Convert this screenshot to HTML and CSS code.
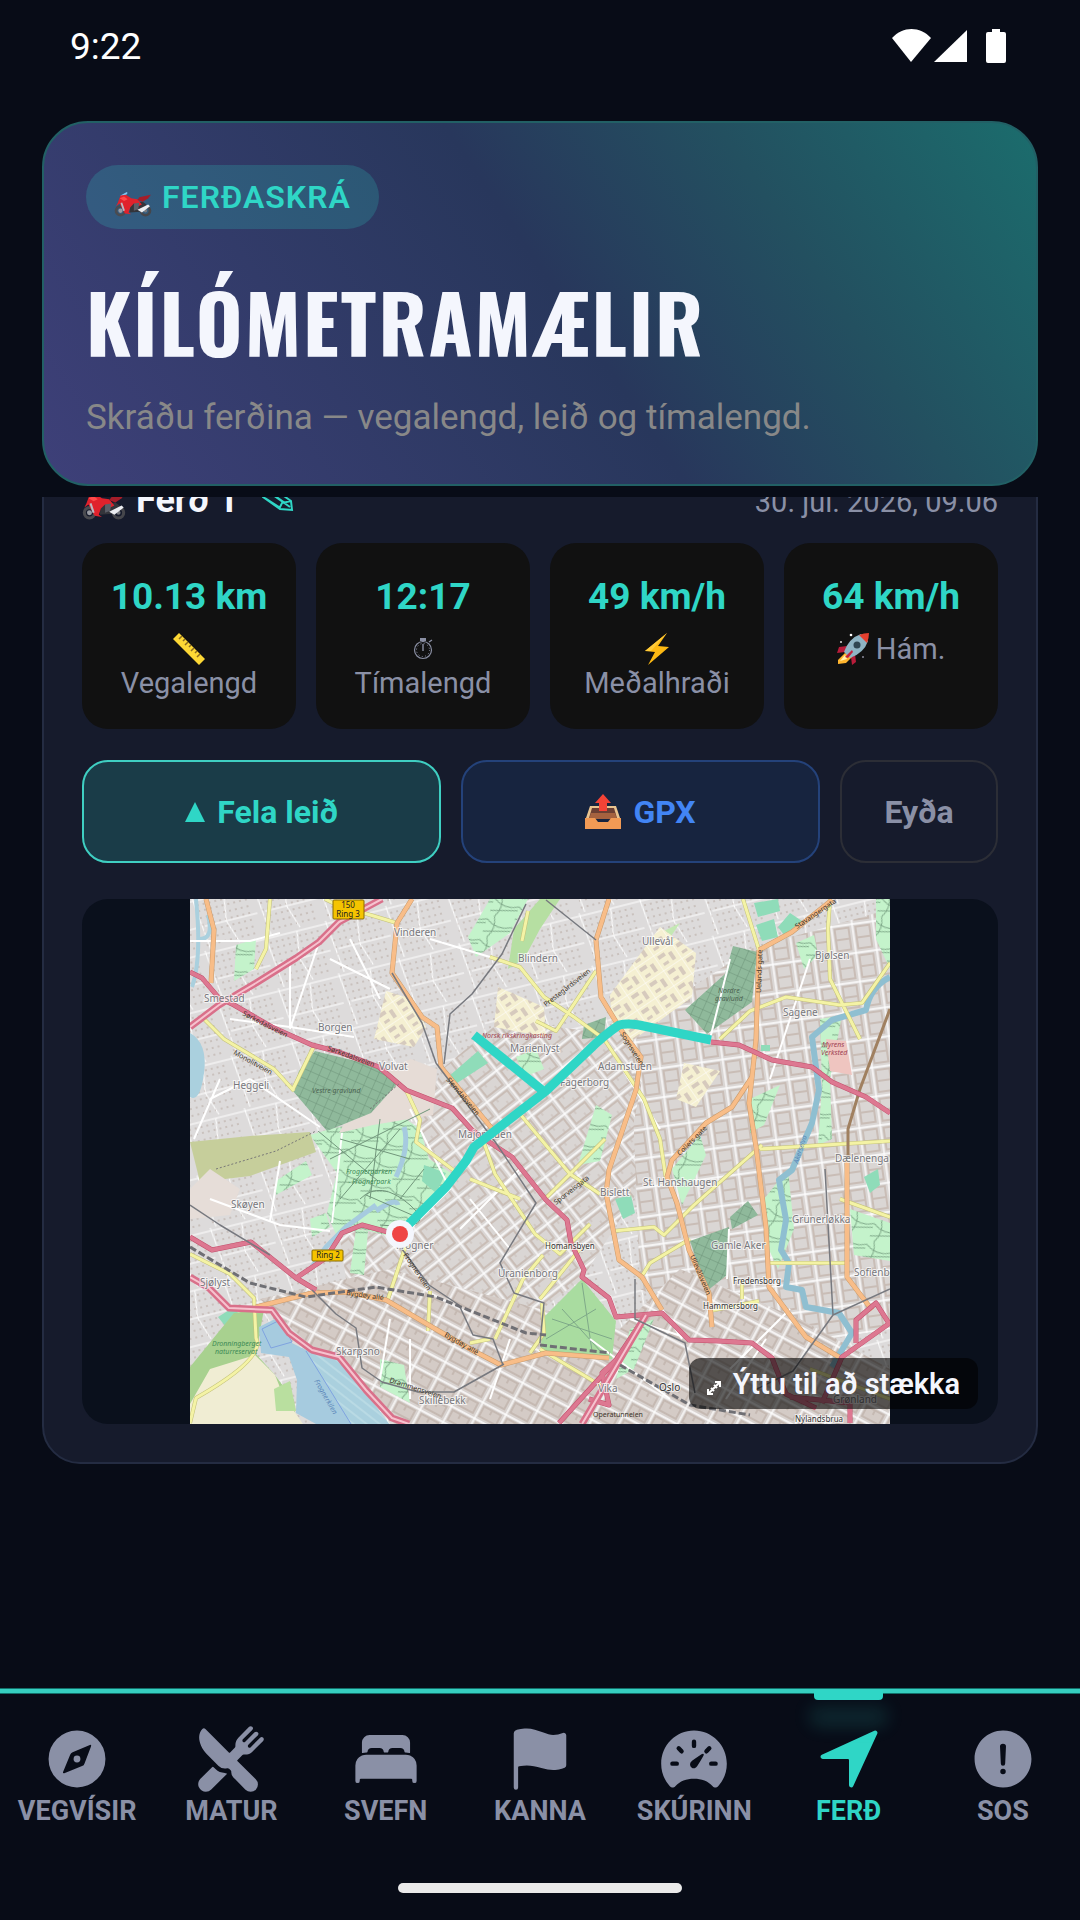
FILE: index.html
```html
<!DOCTYPE html>
<html lang="is">
<head>
<meta charset="utf-8">
<meta name="viewport" content="width=device-width, initial-scale=1">
<title>Kílómetramælir</title>
<link rel="stylesheet" href="styles.css">
</head>
<body>
<svg class="defs" aria-hidden="true">
  <symbol id="moto" viewBox="0 0 42 28">
    <circle cx="7" cy="21" r="5" fill="none" stroke="#4a4b50" stroke-width="3"/>
    <circle cx="7" cy="21" r="2.400" fill="#9a9ca3"/>
    <circle cx="35" cy="21" r="5" fill="none" stroke="#45464b" stroke-width="3"/>
    <circle cx="35" cy="21" r="2" fill="#77797f"/>
    <path d="M18 12l14-1 4 3-7 8-12 1z" fill="#33343a"/>
    <path d="M7 4l7-4 1 1-5 6z" fill="#7cc4ee"/>
    <path d="M4 12L7 4l6-1 6 4 7 1 5 6-4 2-5-3-4 4-2 6 3 2-7-1-4-7-2-4-4 3z" fill="#e0222c"/>
    <path d="M6 7l5-2 4 3-4 2z" fill="#ff4a4a"/>
    <path d="M28 6l13-3-3 4-6 4-6-2z" fill="#a51d29"/>
    <path d="M8 12l3 9" stroke="#b9bcc4" stroke-width="2"/>
    <path d="M22 13l6-1-1 7-5 2z" fill="#5c5e68"/>
    <path d="M26 20l12-6 2 2-9 7z" fill="#eceef2"/>
  </symbol>
</svg>

<div class="app">
  <header class="top">
    <div class="status">
      <span>9:22</span>
      <svg class="status-icons" viewBox="0 0 114 34" aria-hidden="true">
        <path d="M19 33L0 9C11-3 28-3 39 9z"/>
        <path d="M75 1v32H42z"/>
        <path d="M100 0h8v3h4q2 0 2 2v27q0 2-2 2H96q-2 0-2-2V5q0-2 2-2h4z"/>
      </svg>
    </div>
    <section class="hero">
      <p class="pill"><svg aria-hidden="true"><use href="#moto"/></svg>FERÐASKRÁ</p>
      <h1>KÍLÓMETRAMÆLIR</h1>
      <p class="lead">Skráðu ferðina — vegalengd, leið og tímalengd.</p>
    </section>
  </header>

  <main class="scroll">
    <article class="trip">
      <div class="trip-head">
        <h2><svg class="trip-moto" aria-hidden="true"><use href="#moto"/></svg>Ferð 1</h2>
        <button class="edit" aria-label="Breyta nafni">
          <svg viewBox="0 0 34 24" aria-hidden="true"><path d="M3 2L14 1l17 12 1 9-12-1L3 9zM14 1l-1 6 17 12M3 6l10 1M3 2l4 5M19 21l3-6 9-2M5 10l14 9M8 3l17 12"/></svg>
        </button>
        <time>30. júl. 2026, 09.06</time>
      </div>

      <div class="stats">
        <div class="stat">
          <strong>10.13 km</strong>
          <span><svg viewBox="0 0 32 32" aria-hidden="true"><path d="M6 0l26 26-6 6L0 6z" fill="#fdd835"/><path d="M9 3L6 6m6 0l-2 2m5 1l-3 3m6 0l-2 2m5 1l-3 3m6 0l-2 2m5 1l-3 3" stroke="#8a6a20" stroke-width="1.500"/></svg><br>Vegalengd</span>
        </div>
        <div class="stat">
          <strong>12:17</strong>
          <span><svg viewBox="0 0 32 32" aria-hidden="true" fill="none" stroke="#8a8fa3"><circle cx="16" cy="17" r="8.500" stroke-width="1.200"/><path d="M16 6v3m0 9V11M22 9l3-2" stroke-width="1.400"/><path d="M13 6.500h6" stroke-width="3"/><circle cx="16" cy="17" r="6.500" stroke-dasharray="1 2.400"/></svg><br>Tímalengd</span>
        </div>
        <div class="stat">
          <strong>49 km/h</strong>
          <span><svg viewBox="0 0 32 32" aria-hidden="true"><path d="M26 0L4 18l10 1-7 13 21-18-11-1z" fill="#fdb913"/><path d="M26 0L4 18l6 0z" fill="#feca3a"/></svg><br>Meðalhraði</span>
        </div>
        <div class="stat">
          <strong>64 km/h</strong>
          <span><svg viewBox="0 0 32 32" aria-hidden="true"><path d="M10 13l-8 1-2 6 8-1zM18 21l1 8-4 3-1-8z" fill="#b81c3a"/><path d="M8 20L1 27l0 4 8-1 6-6z" fill="#ffb52e"/><path d="M8 22l-5 6 7-2z" fill="#fff3b0"/><path d="M7 19Q12 5 24 1l7 7Q27 20 13 25z" fill="#8fb4c4"/><path d="M22 2Q27 0 32 0q0 5-2 10z" fill="#e5402f"/><circle cx="20" cy="12" r="3.500" fill="#2f4652"/><path d="M8 24l7-7 1 2-5 6z" fill="#c2213d"/><circle cx="14" cy="2" r="1.300" fill="#fff"/><circle cx="4" cy="9" r="1" fill="#ddd"/><circle cx="26" cy="24" r="1" fill="#889"/></svg> Hám.</span>
        </div>
      </div>

      <div class="actions">
        <button class="btn hide"><svg class="tri" viewBox="0 0 20 20" aria-hidden="true"><path d="M10 0l10 20H0z"/></svg>Fela leið</button>
        <button class="btn gpx"><svg class="tray" viewBox="0 0 36 36" aria-hidden="true"><path d="M5 12h26l4 12H1z" fill="#e9c38f"/><path d="M7 14h22l3 10H4z" fill="#6b3f33"/><path d="M6 19h24l2 6H4z" fill="#a5623f"/><path d="M0 24h10l3 4h10l3-4h10v11H0z" fill="#f19a55"/><path d="M18 0l8 9h-4v8h-8V9h-4z" fill="#f44336"/></svg>GPX</button>
        <button class="btn delete">Eyða</button>
      </div>

      <div class="map">
        <svg class="map-art" viewBox="0 0 700 525" role="img" aria-label="Kort af leið um Ósló">
          <defs>
            <pattern id="homes" width="62" height="54" patternUnits="userSpaceOnUse" patternTransform="rotate(-14)">
              <path d="M0 0h62v54H0z" fill="#dddbdb"/>
              <path d="M5 8h52M5 14h52M5 21h52M5 28h52M5 35h52M5 42h52M5 49h52" stroke="#c9c1bd" stroke-width="2" stroke-dasharray="2 4"/>
              <path d="M0 3h62M2 0l6 54M34 3l-4 27 8 24M8 30h54" fill="none" stroke="#fff"/>
            </pattern>
            <pattern id="gridA" width="27" height="19" patternUnits="userSpaceOnUse" patternTransform="rotate(-38)">
              <path d="M0 0h27v19H0z" fill="#dad6d4"/>
              <path d="M4 4h20v12H4z" fill="#dad6d4" stroke="#c9bdb6" stroke-width="2"/>
              <path d="M10 4v4M17 12v4" stroke="#c9bdb6"/>
              <path d="M0 1h27M1 0v19" stroke="#fff" stroke-width="1.300"/>
            </pattern>
            <pattern id="gridB" width="21" height="29" patternUnits="userSpaceOnUse" patternTransform="rotate(-8)">
              <path d="M0 0h21v29H0z" fill="#dad6d4"/>
              <path d="M4 4h14v22H4zM4 15h14" fill="#dad6d4" stroke="#c9bdb6" stroke-width="2"/>
              <path d="M0 1h21M1 0v29" stroke="#fff" stroke-width="1.300"/>
            </pattern>
            <pattern id="gridC" width="26" height="18" patternUnits="userSpaceOnUse" patternTransform="rotate(28)">
              <path d="M0 0h26v18H0z" fill="#d8d2cf"/>
              <path d="M4 4h19v11H4zM13 4v5" fill="#d4cbc6" stroke="#c5b9b2" stroke-width="2"/>
              <path d="M0 1h26M1 0v18" stroke="#fff" stroke-width="1.300"/>
            </pattern>
            <pattern id="graves" width="9" height="9" patternUnits="userSpaceOnUse" patternTransform="rotate(24)">
              <path d="M0 0h9v9H0z" fill="#8fb99b"/>
              <path d="M0 0h9M0 0v9" stroke="#6d9379"/>
            </pattern>
            <pattern id="park" width="26" height="22" patternUnits="userSpaceOnUse" patternTransform="rotate(20)">
              <path d="M0 0h26v22H0z" fill="#c4f3cb"/>
              <path d="M0 5q13 8 26 0M6 0q6 11 0 22M0 18L26 9" fill="none" stroke="#7fa989" stroke-width="1"/>
            </pattern>
            <pattern id="campus" width="22" height="18" patternUnits="userSpaceOnUse" patternTransform="rotate(-34)">
              <path d="M0 0h22v18H0z" fill="#f5f0d2"/>
              <path d="M3 3h8v4H3zM14 6h4v9h-4zM4 12h6v3H4z" fill="#d6cabd"/>
              <path d="M0 0h22M0 0v18" stroke="#fff"/>
            </pattern>
            <pattern id="berths" width="60" height="8" patternUnits="userSpaceOnUse" patternTransform="rotate(38)">
              <path d="M0 0h60v8H0z" fill="#aad0de"/>
              <path d="M0 1h60" stroke="#c8e4ea"/>
            </pattern>
            <path id="yellow-roads" d="M14 120l20 20 50 30 20 22M125 145l-22 45M80 0l-4 50-10 20M135 0l12 6 60 18M300 58l30 10 24 30 30 20 30 22 40 60 16 40 6 40M338 12l-6 30M346 122l20 10 40-60M216 191l14 30-4 22 40 30M293 241l12 34 20 30 20 30 25 20 30-30M355 300l60-60M330 215l50 60 30 20M553 0l16 51M640 0l-2 30 2 50 30 60M530 140l30-28 36-14 54 8 22-2 14-20 14-20M570 250l130-8M650 300l50 18M424 332l40-4 10 8 30-30 68-60M580 364h76M519 412l50-10M552 400v-20M450 380l10-16 40-24M0 355l40 20 24 24 2 40q10 20-60 60L0 524M216 346l-18 54M240 392l-2 40M300 440l-20 4M350 450l50 30 16 10M350 400l40-50M305 440l28-60 20-24M340 454l14-20-2-30M620 470l80 30M280 280l50 20"/>
            <path id="orange-roads" d="M222 0l-15 24-5 50 30 44 15 10 4 40 58 70M419 0l-13 41 5 57 20 33 20 27-5 33-27 80-3 23 13 67 23 17 20 33M569 51l-3 90-4 37-3 26 7 44 10 80 3 60 37 50 33 20M562 178l-20 30-26 16-34 37-5 17 10 26 12 47 20 43 3 34M569 51l33-18 40-32M16 0l8 31-3 53M66 408l56-14 34-1 40 8 46 27 40 23 29 15 45-12 63 5M657 261v117l25 33"/>
            <path id="tram-roads" d="M700 110l-30 80-12 40v30"/>
            <path id="pink-roads" d="M0 73l12 6 17 20 15 7 38 22 40 18 27 7 40 15 27 23 46 18 20 22 14 10 26 17 34 43 21 20 4 23 13 27-2 7 27 21 7 19 46-4 27 27 30 1 33 2 20 15 14 36 30 14M521 143l28 3 33 15 40 7 20 15 34 15 24 16M209 336l-37-10-20 8-16 25-30 20M0 338l22 13 39-8 45 36 20 12M456 416l-30 45-14 13 7 32-20-6M369 524l57-63M700 424l-48 34-20 46M666 444v-23l20-17 14 22M600 498l60 6v20"/>
            <path id="motorways" d="M0 128l29-22 37-22 40-25 23-16 20-20 43-23M0 378l19 11 20 20 43 2 17 23 23 17 27 7 27 33 26 28 17 6M392 525l64-109"/>
          </defs>

          <rect width="700" height="525" fill="url(#homes)"/>
          <path d="M252 170l60-50 140 20 10 130-70 110-120 90-110-50-15-100 70-70z" fill="url(#gridA)"/>
          <path d="M440 130L560 50l140-40v420l-120 20-130-60z" fill="url(#gridB)"/>
          <path d="M70 400l130-30 150 40 80 20 60-60 120 50 90 50v55H205z" fill="url(#gridC)"/>
          <path d="M282 232l120-70 50 20-30 150-40-20-60-60z" fill="url(#gridA)"/>

          <g fill="url(#park)">
            <path d="M120 236l20-6 70-14 20 14 9 30 22 14-14 30-44 34-32-8-24 8-10-24 10-40z"/>
            <path d="M300 0h38l-18 34-34 24-8-20z"/>
            <path d="M392 380l34 42-4 38-72-6 4-36z" fill="#a9dca0"/>
            <path d="M660 310l40 14v38l-36-6z"/>
            <path d="M406 206l16 10-12 46-22 4z"/>
            <path d="M630 120l22-4-12 64 2 60-14 6 4-60z"/>
            <path d="M482 270l28-34 6 20-24 50z"/>
            <path d="M574 300l24-30 6 60-16 40-14-30z"/>
            <path d="M686 0h14v70l-14-30z"/>
            <path d="M560 200l30-14-16 40-14 8z"/>
            <path d="M190 460l24 6 6 38-30-16z"/>
            <path d="M440 430l24-10-20 50-18 10z"/>
            <path d="M46 46l20-6-2 30-20 12zM166 330l12 2-4 44-14-2z"/>
            <path d="M606 44l18-8 4 20-14 14zM326 158l20-8 8 20-20 8zM86 282l30-20 6 14-36 20zM120 320l16-6 4 14-18 10z"/>
          </g>
          <path d="M392 384l10 68M362 420l60 20M372 410l40 44M356 440l50-30" fill="none" stroke="#7fa989"/>
          <path d="M0 243l60-6 60-4 6 20-66 24-50 6z" fill="#c6ce9b"/>
          <path d="M350 30l-16 30-16 10 6-40 26-30h20z" fill="#b6dfa2"/>
          <path d="M430 88l40-54 20-10-30 44-20 26z" fill="#c4e8b4"/>
          <path d="M0 134q18 10 14 40t-14 24z" fill="#aad0de"/>
          <path d="M10 40q14 0 8-24M2 88Q12 60 6 0" fill="none" stroke="#aad0de" stroke-width="4"/>

          <g fill="url(#campus)">
            <path d="M420 96l50-68 36 26-4 44-60 44-20-14z"/>
            <path d="M196 92l26 8 14 28-12 20-40-8z"/>
            <path d="M308 88l46 20 2 30-52-10z"/>
            <path d="M494 164l36 8-24 36-20-8z"/>
            <path d="M0 290l20-20 30 20-10 26-40 4z" fill="#e6ddd8"/>
          </g>
          <path d="M181 176l40-16 26 10-4 46-60 10-34 8z" fill="#e6dcd6"/>
          <path d="M125 152l65 16 18 16-27 30-44 18-34-40 6-20z" fill="url(#graves)"/>
          <path d="M543 47l24 6-5 50-45 32-22-24 40-36z" fill="url(#graves)"/>
          <path d="M500 342l39-14-2 48-20 16zM540 318l18-16 10 14-26 14zM394 126l22-8-2 20-22 2z" fill="url(#graves)"/>
          <path d="M636 140l20 2 6 34-22-4z" fill="#efc5c0"/>
          <g fill="#8fdcb9">
            <path d="M258 178l30-26 10 12-34 22zM564 4l24-4 2 12-22 6zM566 26l18-6 4 18-16 4zM600 14l12 8-18 14-6-8zM425 300l16-4 4 18-12 6zM674 278l14-8 2 16-10 8zM234 266l22 8-10 20-14-12zM28 418l16-10 8 12-16 8zM571 146h9v6h-9z"/>
          </g>

          <path d="M0 468l44-54 30-4-8 45 18 20 20 26 2 24H0z" fill="#a8d18f"/>
          <path d="M20 470l45-14 20 20 8 20 20 29H0v-20z" fill="#f0edd3"/>
          <path d="M84 490l16-8 6 30-20 0z" fill="#b9df9f"/>
          <path d="M69 428l20-10 13 26 14 7 33 7 50 67h-73l-20-11 1-33-8-23-28-4z" fill="#a6cbdf"/>
          <path d="M116 451l33 7 50 67h-38z" fill="url(#berths)"/>
          <path d="M72 430l18-9 12 22-21 6zM116 452l45 73" fill="none" stroke="#7fa3e0"/>

          <path d="M700 78q-20 10-24 33l-34 10-20 17 7 53-7 33-20 47-13 10 7 40-5 30 8 13-3 24 16 3 4 17 33 6 13 20-20 34" fill="none" stroke="#8fbfd1" stroke-width="6" stroke-linejoin="round"/>
          <path d="M206 278q14-30 8-50M186 312q20-14 22-6M186 306l-30 22-20 20-14 20" fill="none" stroke="#a6cbdf" stroke-width="5"/>

          <g fill="none" stroke="#fff" stroke-width="2">
            <path d="M0 42h60l30-8M40 120l60 8 64 10M100 128V60M60 180l70 48M30 180L4 240M60 180L20 200M130 40q-20 60-30 90M140 60l60 30M160 40l30 60"/>
            <path d="M240 40l60 18M220 210l40 80-40 40M152 234l-10 90M90 262l-10 60M20 300l70 26 50 6M280 300l40 50M330 270l-60 60M540 60l-20 80M620 60l-40 120M420 150l50 80"/>
            <path d="M539 330l-2 50M452 380l40 60M500 440l-60-20M320 440l-20 60M200 420l-10 60M220 440v60M480 500l-80-60M540 470l60-60M576 440l-40 60"/>
          </g>

          <g fill="none" stroke-linejoin="round">
            <use href="#yellow-roads" stroke="#c3c179" stroke-width="4"/>
            <use href="#yellow-roads" stroke="#f4f3a5" stroke-width="3"/>
            <use href="#orange-roads" stroke="#c99a6b" stroke-width="5"/>
            <use href="#orange-roads" stroke="#f8bd88" stroke-width="4"/>
            <use href="#tram-roads" stroke="#a08060" stroke-width="3"/>
            <use href="#pink-roads" stroke="#c2506d" stroke-width="5"/>
            <use href="#pink-roads" stroke="#dd7891" stroke-width="4"/>
            <use href="#motorways" stroke="#d9708a" stroke-width="7"/>
            <use href="#motorways" stroke="#f6c3cf" stroke-width="2"/>
            <path d="M336 5l-24 50-30 40-22 20-6 50M202 74l30 50 14 40 60 80 40 60-36 60 14 30 30 10-4 40M406 41l-50-40M122 391l24 24 20 14 6 40 20 14 36 10h36l50-28M209 346l30 40 30 20 14 30 20 4 10 26M0 306l30 20 50 30M635 270l8 146-40 56-40 20M445 380v40l50 24 10 50M643 416l57-26" stroke="#77797f" stroke-width="1.500"/>
            <path d="M0 348l60 36 56 14 70-10 60 10 90 36 20 2M350 446l70 8M430 466l70 40 60 10" stroke="#6f6f74" stroke-width="3" stroke-dasharray="7 3"/>
            <path d="M26 270l60-18 40-20M180 210l30-26" stroke="#777" stroke-dasharray="2 2"/>
            <path d="M128 232l60 50M140 260l100-50M150 300l60-70M150 240l70 20M190 220l-10 80M210 300l24-30M176 296l46 20M170 300q20-20 50 6t-30 20" stroke="#71967b"/>
          </g>

          <g class="place">
            <text x="204" y="37">Vinderen</text><text x="328" y="63">Blindern</text><text x="452" y="46">Ullevål</text><text x="625" y="60">Bjølsen</text>
            <text x="14" y="103">Smestad</text><text x="128" y="132">Borgen</text><text x="189" y="171">Volvat</text><text x="43" y="190">Heggeli</text>
            <text x="320" y="153">Marienlyst</text><text x="408" y="171">Adamstuen</text><text x="370" y="187">Fagerborg</text><text x="593" y="117">Sagene</text>
            <text x="268" y="239">Majorstuen</text><text x="645" y="263">Dælenenga</text><text x="41" y="309">Skøyen</text><text x="206" y="350">Frogner</text>
            <text x="410" y="297">Bislett</text><text x="453" y="287">St. Hanshaugen</text><text x="602" y="324">Grünerløkka</text><text x="521" y="350">Gamle Aker</text>
            <text x="308" y="378">Uranienborg</text><text x="664" y="377">Sofienberg</text><text x="10" y="387">Sjølyst</text><text x="146" y="456">Skarpsno</text>
            <text x="229" y="505">Skillebekk</text><text x="408" y="493">Vika</text><text x="643" y="504">Grønland</text>
          </g>
          <g class="place small">
            <text x="355" y="350">Homansbyen</text><text x="543" y="385">Fredensborg</text><text x="513" y="410">Hammersborg</text><text x="605" y="523">Nylandsbrua</text><text x="469" y="492" class="city">Oslo</text>
          </g>
          <g class="road">
            <text x="52" y="116" transform="rotate(27 52 116)">Sørkedalsveien</text><text x="137" y="151" transform="rotate(20 137 151)">Sørkedalsveien</text>
            <text x="43" y="155" transform="rotate(29 43 155)">Monolitveien</text><text x="256" y="181" transform="rotate(50 256 181)">Slemdalsveien</text>
            <text x="607" y="30" transform="rotate(-34 607 30)">Stavangergata</text><text x="571" y="94" transform="rotate(-88 571 94)">Uelands gate</text>
            <text x="490" y="257" transform="rotate(-45 490 257)">Collets gate</text><text x="156" y="396" transform="rotate(8 156 396)">Bygdøy allé</text>
            <text x="254" y="437" transform="rotate(30 254 437)">Bygdøy allé</text><text x="500" y="357" transform="rotate(67 500 357)">Ullevålsveien</text>
            <text x="199" y="483" transform="rotate(18 199 483)">Drammensveien</text><text x="356" y="108" transform="rotate(-38 356 108)">Prestegårdsveien</text>
            <text x="430" y="135" transform="rotate(58 430 135)">Sognsveien</text><text x="403" y="518">Operatunnelen</text>
            <text x="213" y="356" transform="rotate(56 213 356)">Frognerveien</text><text x="366" y="306" transform="rotate(-38 366 306)">Sporveisgata</text>
          </g>
          <g class="nature">
            <text x="122" y="194" fill="#4c6351">Vestre gravlund</text><text x="528" y="94" fill="#4c6351">Nordre</text><text x="525" y="102" fill="#4c6351">gravlund</text>
            <text x="156" y="275">Frognerparken</text><text x="158" y="285">- Frognerpark</text><text x="22" y="447">Dronningberget</text><text x="25" y="455">naturreservat</text>
            <text x="292" y="139" fill="#a04352">Norsk rikskringkasting</text><text x="632" y="148" fill="#a04352">Myrens</text><text x="631" y="156" fill="#a04352">Verksted</text>
            <text x="124" y="482" transform="rotate(60 124 482)" fill="#5b86b8">Frognerkilen</text><text x="608" y="265" transform="rotate(-72 608 265)" fill="#5b86b8">Akerselva</text>
          </g>
          <g class="shield">
            <rect x="143" y="1" width="31" height="19" rx="1"/><text x="158" y="9">150</text><text x="158" y="18">Ring 3</text>
            <rect x="122" y="351" width="31" height="11" rx="1"/><text x="138" y="359">Ring 2</text>
          </g>
          <g class="route">
            <path d="M284 136l68 55"/>
            <path d="M213 331l43-43 20-26 8-14 72-56 43-41q14-14 30-25 8-2 20 0l72 15"/>
          </g>
          <circle cx="210" cy="335" r="14" fill="#f4f6fd"/><circle cx="210" cy="335" r="8" fill="#ef4444"/>
        </svg>
        <button class="zoom-hint"><svg viewBox="0 0 14 14" aria-hidden="true"><path d="M1 13L13 1M8 1h5v5M1 8v5h5M4 7l3 3M7 4l3 3"/></svg>Ýttu til að stækka</button>
      </div>
    </article>
  </main>

  <nav class="tabs">
    <div class="tab-row">
      <a href="#vegvisir"><svg viewBox="0 0 512 512" aria-hidden="true"><path fill-rule="evenodd" d="M256 48a208 208 0 100 416 208 208 0 100-416zM350 153q12-3 9 9l-48 126q-4 14-18 20l-130 52q-12 3-9-9l52-126q5-13 18-19z"/><circle cx="256" cy="256" r="25"/></svg>VEGVÍSIR</a>
      <a href="#matur"><svg viewBox="0 0 512 512" aria-hidden="true"><path d="M357.570 223.940a79.480 79.480 0 0056.580-23.440l77-76.950c6.090-6.090 6.650-16 .850-22.390a16 16 0 00-23.170-.560l-68.630 68.580a12.290 12.290 0 01-17.370 0c-4.790-4.780-4.530-12.860.250-17.640l68.330-68.330a16 16 0 00-.560-23.160A15.620 15.620 0 00440.270 56a16.710 16.710 0 00-11.810 4.900l-68.270 68.260a12.290 12.290 0 01-17.370 0c-4.780-4.780-4.530-12.860.250-17.640l68.330-68.310a16 16 0 00-.560-23.150A15.620 15.620 0 00400.260 16a16.730 16.730 0 00-11.810 4.900L311.500 97.850a79.490 79.490 0 00-23.440 56.590v8.230a16 16 0 01-4.690 11.330l-35.610 35.620a4 4 0 01-5.660 0L68.820 36.330a16 16 0 00-22.580-.060C31.090 51.280 23 72.470 23 97.540c-.1 41.400 21.660 89 56.790 124.080l85.450 85.450A64.790 64.790 0 00211 326a64 64 0 0016.210-2.080 16.240 16.240 0 014.070-.530 15.930 15.930 0 0110.830 4.250l11.390 10.520a16.120 16.120 0 014.600 11.230v5.540a47.730 47.730 0 0013.770 33.650l90.050 91.570.090.1a53.290 53.290 0 0075.360-75.370L302.390 269.900a4 4 0 010-5.660L338 228.630a16 16 0 0111.320-4.690z"/><path d="M211 358a97.320 97.320 0 01-68.360-28.250l-13.860-13.860a8 8 0 00-11.300 0l-85 84.560c-15.150 15.150-20.560 37.450-13.060 59.290C31 484 50.580 496 72 496a55.680 55.680 0 0039.640-16.440L228 363z"/></svg>MATUR</a>
      <a href="#svefn"><svg viewBox="0 0 512 512" aria-hidden="true"><path d="M432 230.700a79.440 79.440 0 00-32-6.700H112a79.510 79.510 0 00-32 6.690A80.090 80.090 0 0032 304v112a16 16 0 0032 0v-8a8.100 8.100 0 018-8h368a8.100 8.100 0 018 8v8a16 16 0 0032 0V304a80.090 80.090 0 00-48-73.300zM376 80H136a56 56 0 00-56 56v72a4 4 0 005.110 3.840A95.500 95.500 0 01112 208h4.230a4 4 0 004-3.550A32 32 0 01152 176h56a32 32 0 0131.800 28.450 4 4 0 004 3.550h24.460a4 4 0 004-3.550A32 32 0 01304 176h56a32 32 0 0131.800 28.450 4 4 0 004 3.550H400a95.510 95.510 0 0126.890 3.850A4 4 0 00432 208v-72a56 56 0 00-56-56z"/></svg>SVEFN</a>
      <a href="#kanna"><svg viewBox="0 0 512 512" aria-hidden="true"><path d="M80 480a16 16 0 01-16-16V68.130a24 24 0 0111.900-20.720C88 40.380 112.380 32 160 32c37.210 0 78.830 14.710 115.550 27.680C305.120 70.130 333.050 80 352 80a183.840 183.840 0 0071-14.500 18 18 0 0125 16.580v219.360a20 20 0 01-12 18.310c-8.710 3.810-40.510 16.250-84 16.250-24.140 0-54.380-7.140-86.390-14.710C229.630 312.790 192.430 304 160 304c-36.870 0-55.740 5.580-64 9.110V464a16 16 0 01-16 16z"/></svg>KANNA</a>
      <a href="#skurinn"><svg viewBox="0 0 512 512" aria-hidden="true"><path d="M256 48C123.460 48 16 156.550 16 290.560a243.300 243.300 0 0060.320 160.870c1.180 1.300 2.250 2.600 3.430 3.790C89.200 464 92.070 464 99.570 464s12.430 0 19.930-8.880C152 416.640 202 400 256 400s104.070 16.680 136.500 55.120C400 464 404.820 464 412.430 464s11.300 0 19.820-8.780c1.220-1.250 2.250-2.490 3.430-3.790A243.300 243.300 0 00496 290.560C496 156.550 388.540 48 256 48z"/><path class="cut-line" d="M256 129v31M98 290h32M382 290h32M144 178l21 22M368 178l-21 22"/><path class="cut" d="M311 222q14-9 17 2 0 5-48 84a28 28 0 11-43-34q7-7 74-52z"/></svg>SKÚRINN</a>
      <a href="#ferd" class="active" aria-current="page"><svg viewBox="0 0 512 512" aria-hidden="true"><path d="M272 464a16 16 0 01-16-16.420V264.130a8 8 0 00-8-8H64.410a16.310 16.310 0 01-15.490-10.650 16 16 0 018.410-19.870l384-176.150a16 16 0 0121.220 21.190l-176 384A16 16 0 01272 464z"/></svg>FERÐ</a>
      <a href="#sos"><svg viewBox="0 0 512 512" aria-hidden="true"><path fill-rule="evenodd" d="M256 48C141.310 48 48 141.310 48 256s93.310 208 208 208 208-93.310 208-208S370.690 48 256 48zm0 319.910a20 20 0 1120-20 20 20 0 01-20 20zm21.720-201.150l-5.740 122a16 16 0 01-32 0l-5.740-121.940v-.050a21.740 21.740 0 1143.440 0z"/></svg>SOS</a>
    </div>
    <div class="home-bar"></div>
  </nav>
</div>
</body>
</html>
```
FILE: styles.css
```css
* { box-sizing: border-box; }

:root {
  --bg: #080c17;
  --teal: #2fd6c6;
  --muted: #8a90a6;
}

body {
  margin: 0;
  background: var(--bg);
  color: #f4f6fd;
  font-family: Roboto, "Noto Sans", sans-serif;
}

h1, h2, p { margin: 0; }
button { font: inherit; color: inherit; background: none; border: 0; padding: 0; }
.defs { display: block; width: 0; height: 0; }

.app { display: flex; flex-direction: column; min-height: 100vh; }

.top { position: relative; padding: 0 42px 11px; background: var(--bg); }

.status {
  display: flex;
  align-items: center;
  justify-content: space-between;
  height: 92px;
  margin-bottom: 29px;
  padding: 0 32px 0 28px;
  color: #fff;
  font-size: 37px;
}
.status-icons { width: 114px; height: 34px; fill: #fff; }

.hero {
  padding: 42px;
  border: 2px solid #226065;
  border-radius: 46px;
  background: linear-gradient(56deg, #3e4079 0%, #28375c 52%, #235060 74%, #1b6d6d 100%) border-box;
}
.pill {
  display: flex;
  align-items: center;
  gap: 10px;
  width: fit-content;
  height: 64px;
  margin-bottom: 48px;
  padding: 0 28px;
  border-radius: 32px;
  background: rgba(47, 214, 198, 0.2);
  color: var(--teal);
  font-size: 32px;
  font-weight: 600;
  letter-spacing: 1px;
}
.pill svg { width: 38px; height: 25px; margin-top: 14px; }
h1 {
  margin-bottom: 29px;
  font-family: Oswald, "Roboto Condensed", "Liberation Sans Narrow", sans-serif;
  font-size: 80px;
  line-height: 88px;
  font-weight: 700;
  letter-spacing: 2px;
}
.lead { color: #888; font-size: 35px; line-height: 48px; }

.scroll { flex: 1; padding: 0 42px 40px; overflow: hidden; }

.trip {
  margin-top: -58px;
  padding: 38px;
  border: 2px solid #242c42;
  border-radius: 38px;
  background: #161b2c;
}
.trip-head { display: flex; align-items: baseline; height: 42px; margin-bottom: 22px; }
h2 { font-size: 36px; line-height: 42px; font-weight: 700; }
.trip-moto { width: 44px; height: 29px; margin-right: 10px; vertical-align: -8px; }
.edit { margin-left: 22px; line-height: 42px; }
.edit svg { width: 34px; height: 24px; fill: none; stroke: var(--teal); stroke-width: 2; }
time { margin-left: auto; color: var(--muted); font-size: 29px; line-height: 34px; }

.stats { display: grid; grid-template-columns: repeat(4, 1fr); gap: 20px; margin-bottom: 31px; }
.stat {
  display: flex;
  flex-direction: column;
  gap: 13px;
  padding: 32px 8px 29px;
  border-radius: 26px;
  background: #111;
  text-align: center;
}
.stat strong { color: var(--teal); font-size: 37px; line-height: 44px; }
.stat span { color: var(--muted); font-size: 29px; line-height: 34px; }
.stat svg { width: 32px; height: 32px; vertical-align: -6px; }

.actions { display: grid; grid-template-columns: 359fr 359fr 158fr; gap: 20px; margin-bottom: 36px; }
.btn {
  display: flex;
  align-items: center;
  justify-content: center;
  gap: 12px;
  height: 103px;
  border: 2px solid;
  border-radius: 26px;
  font-size: 32px;
  font-weight: 700;
}
.hide { border-color: #3fcfc2; background: #1a3c48; color: var(--teal); }
.gpx { border-color: #24427a; background: #17243f; color: #4285f4; }
.delete { border-color: #2c2e36; color: var(--muted); }
.tri { width: 20px; height: 20px; fill: currentColor; }
.tray { width: 36px; height: 36px; }

.map {
  position: relative;
  display: flex;
  justify-content: center;
  border-radius: 26px;
  background: #0a101c;
  overflow: hidden;
}
.map-art { display: block; width: 700px; height: 525px; max-width: 100%; }
.map-art text { font-family: "Noto Sans", sans-serif; }
.place { font-size: 10px; fill: #77777c; stroke: #fff; stroke-width: 2px; stroke-opacity: 0.7; paint-order: stroke; }
.small { font-size: 8px; fill: #333; }
.city { font-size: 10px; }
.road { font-size: 7px; fill: #3c3428; }
.nature { font-size: 7px; font-style: italic; fill: #3d8a55; }
.shield rect { fill: #f5c400; stroke: #8a6d00; }
.shield text { font-size: 8px; fill: #222; text-anchor: middle; }
.route { fill: none; stroke: var(--teal); stroke-width: 9px; stroke-linejoin: round; }

.zoom-hint {
  position: absolute;
  right: 20px;
  bottom: 15px;
  display: flex;
  align-items: center;
  gap: 12px;
  height: 51px;
  padding: 0 18px;
  border-radius: 12px;
  background: rgba(0, 0, 0, 0.6);
  color: #f4f6fd;
  font-size: 29px;
  font-weight: 600;
}
.zoom-hint svg { width: 14px; height: 14px; margin-top: 8px; fill: none; stroke: #fff; stroke-width: 2; }

.tabs {
  margin-top: 1px;
  padding-bottom: 27px;
  border-top: 4px solid #36cfc0;
  background: var(--bg);
  box-shadow: 0 -1px #12706a, inset 0 1px #12706a;
}
.tab-row { display: grid; grid-template-columns: repeat(7, 1fr); margin-bottom: 54px; }
.tab-row a {
  position: relative;
  display: flex;
  flex-direction: column;
  align-items: center;
  padding-top: 31px;
  color: var(--muted);
  font-size: 27px;
  line-height: 35px;
  font-weight: 700;
  text-decoration: none;
}
.tab-row svg { width: 70px; height: 70px; fill: currentColor; }
.tab-row .cut { fill: var(--bg); }
.tab-row .cut-line { fill: none; stroke: var(--bg); stroke-width: 32; stroke-linecap: round; }
.tab-row .active { color: var(--teal); }
.active::before {
  content: "";
  position: absolute;
  top: -3px;
  width: 69px;
  height: 10px;
  border-radius: 0 0 4px 4px;
  background: var(--teal);
  box-shadow: 0 22px 18px 4px rgba(47, 214, 198, 0.16);
}
.home-bar { width: 284px; height: 10px; margin: 0 auto; border-radius: 5px; background: #eaeaea; }
```
